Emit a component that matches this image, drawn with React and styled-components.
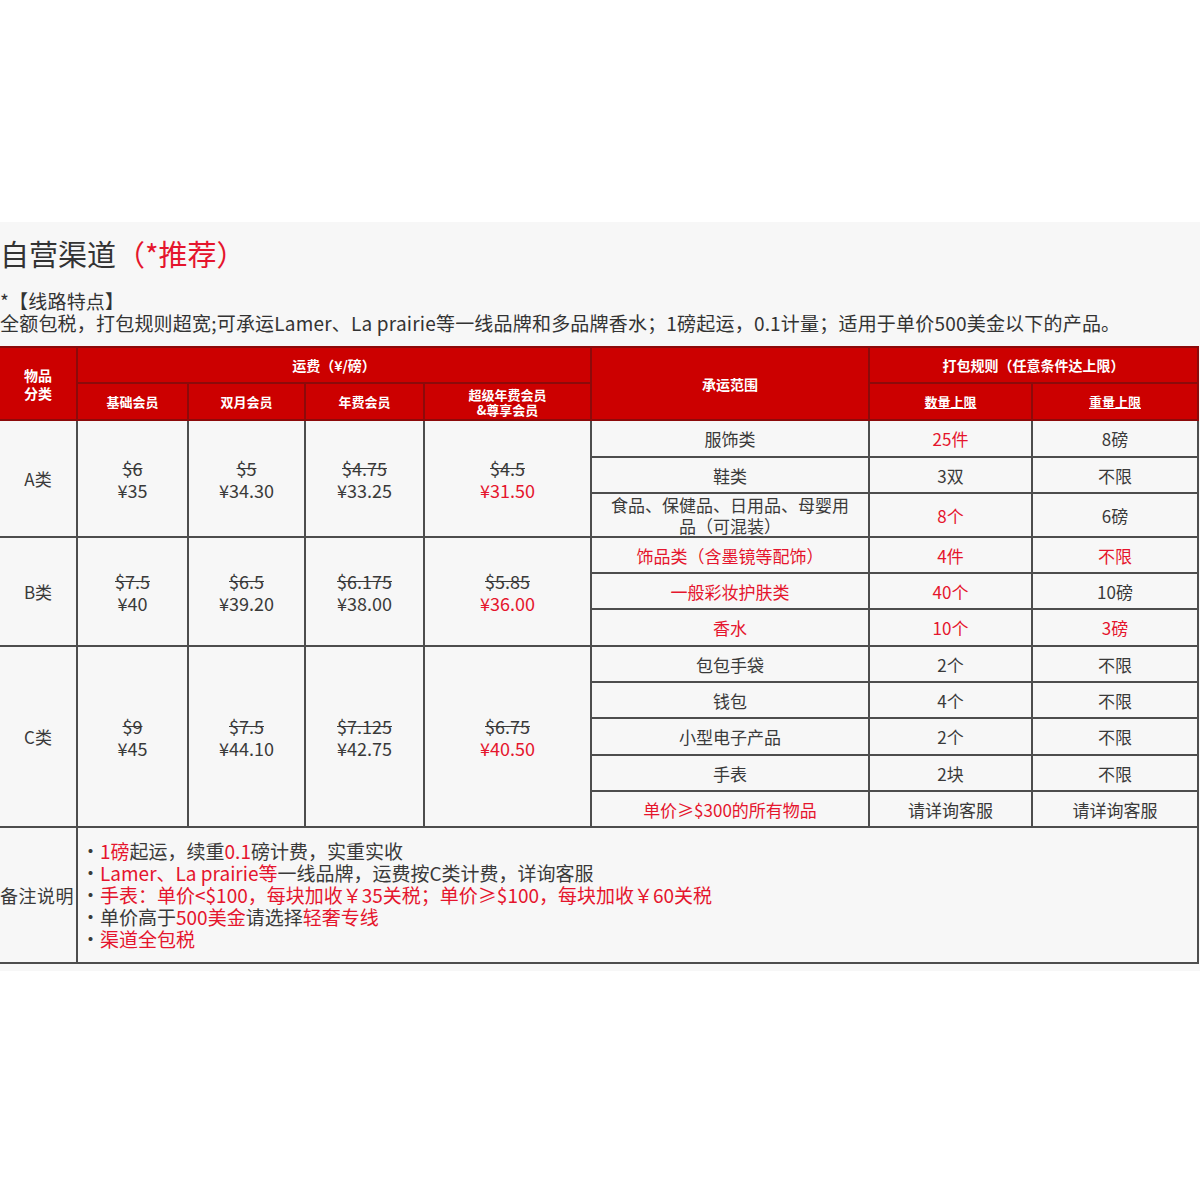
import React from 'react';
import styled, { createGlobalStyle } from 'styled-components';

const GlobalStyle = createGlobalStyle`
    body {
        margin: 0;
        background: #fff;
        font-family: "Noto Sans CJK SC", "Noto Sans", sans-serif;
        color: #3a3a3a;
    }
`;

const Page = styled.div`
    padding-top: 222px;
    min-height: 978px;
    background: #fff;
`;

const Section = styled.section`
    background: #f7f7f7;
    padding: 14px 0 7px;
`;

const Title = styled.h2`
    margin: 0;
    font-size: 29px;
    line-height: 34px;
    font-weight: normal;
    color: #333;
`;

const Red = styled.span`
    color: #e5152d;
`;

const Intro = styled.div`
    margin-top: 20px;
    font-size: 19px;
    letter-spacing: 0.2px;
    line-height: 22px;
    color: #333;
`;

const Table = styled.table`
    margin-top: 12px;
    width: 1198px;
    border-collapse: collapse;
    table-layout: fixed;
    font-size: 17px;
    line-height: 21px;
`;

const Th = styled.th`
    background: #cc0000;
    color: #fff;
    font-weight: bold;
    font-size: ${props => props.small ? '13px' : '14px'};
    line-height: ${props => props.small ? '15px' : '18px'};
    border: 2px solid #8c0a0a;
    border-left: ${props => props.first ? 'none' : '2px solid #8c0a0a'};
    text-align: center;
    vertical-align: middle;
    padding: 0 2px;
    text-decoration: ${props => props.link ? 'underline' : 'none'};
`;

const Td = styled.td`
    border: 2px solid #4d4d4d;
    border-left: ${props => props.first ? 'none' : '2px solid #4d4d4d'};
    text-align: ${props => props.left ? 'left' : 'center'};
    vertical-align: middle;
    padding: ${props => props.left ? '12px 4px 12px 3px' : '0 2px'};
    font-size: ${props => props.big ? '19px' : '17px'};
    color: ${props => props.red ? '#e5152d' : '#3a3a3a'};
`;

const Label = styled(Td)`
    padding: 0;
    font-size: 18px;
    letter-spacing: 0.5px;
    white-space: nowrap;
    text-align: left;
`;

const Old = styled.div`
    font-size: 18px;
    line-height: 22px;
    text-decoration: line-through;
    color: #3a3a3a;
`;

const Now = styled.div`
    font-size: 18px;
    line-height: 22px;
    color: ${props => props.red ? '#e5152d' : '#3a3a3a'};
`;

const Note = styled.div`
    line-height: 22px;
`;

const widths = [77, 111, 117, 119, 167, 278, 163, 166];

const groups = [
    {
        name: 'A类',
        prices: [['$6', '¥35'], ['$5', '¥34.30'], ['$4.75', '¥33.25'], ['$4.5', '¥31.50']],
        rows: [
            { h: 37, scope: ['服饰类'], qty: ['25件', true], wt: ['8磅'] },
            { h: 36, scope: ['鞋类'], qty: ['3双'], wt: ['不限'] },
            { h: 44, scope: [<>食品、保健品、日用品、母婴用<br />品（可混装）</>], qty: ['8个', true], wt: ['6磅'] },
        ],
    },
    {
        name: 'B类',
        prices: [['$7.5', '¥40'], ['$6.5', '¥39.20'], ['$6.175', '¥38.00'], ['$5.85', '¥36.00']],
        rows: [
            { h: 36, scope: ['饰品类（含墨镜等配饰）', true], qty: ['4件', true], wt: ['不限', true] },
            { h: 36, scope: ['一般彩妆护肤类', true], qty: ['40个', true], wt: ['10磅'] },
            { h: 37, scope: ['香水', true], qty: ['10个', true], wt: ['3磅', true] },
        ],
    },
    {
        name: 'C类',
        prices: [['$9', '¥45'], ['$7.5', '¥44.10'], ['$7.125', '¥42.75'], ['$6.75', '¥40.50']],
        rows: [
            { h: 36, scope: ['包包手袋'], qty: ['2个'], wt: ['不限'] },
            { h: 36, scope: ['钱包'], qty: ['4个'], wt: ['不限'] },
            { h: 37, scope: ['小型电子产品'], qty: ['2个'], wt: ['不限'] },
            { h: 36, scope: ['手表'], qty: ['2块'], wt: ['不限'] },
            { h: 36, scope: ['单价≥$300的所有物品', true], qty: ['请详询客服'], wt: ['请详询客服'] },
        ],
    },
];

function GroupRows({ group }) {
    const span = group.rows.length;
    return group.rows.map((row, i) => (
        <tr key={i} style={{ height: row.h }}>
            {i === 0 && (
                <>
                    <Td first rowSpan={span}>{group.name}</Td>
                    {group.prices.map((p, j) => (
                        <Td key={j} rowSpan={span}>
                            <Old>{p[0]}</Old>
                            <Now red={j === 3}>{p[1]}</Now>
                        </Td>
                    ))}
                </>
            )}
            <Td red={row.scope[1]}>{row.scope[0]}</Td>
            <Td red={row.qty[1]}>{row.qty[0]}</Td>
            <Td red={row.wt[1]}>{row.wt[0]}</Td>
        </tr>
    ));
}

export default function App() {
    return (
        <Page>
            <GlobalStyle />
            <Section>
                <Title>自营渠道<Red>（*推荐）</Red></Title>
                <Intro>
                    <div>*【线路特点】</div>
                    <div>全额包税，打包规则超宽;可承运Lamer、La prairie等一线品牌和多品牌香水；1磅起运，0.1计量；适用于单价500美金以下的产品。</div>
                </Intro>
                <Table>
                    <colgroup>
                        {widths.map((w, i) => <col key={i} style={{ width: w }} />)}
                    </colgroup>
                    <thead>
                        <tr style={{ height: 36 }}>
                            <Th first rowSpan={2}>物品<br />分类</Th>
                            <Th colSpan={4}>运费（¥/磅）</Th>
                            <Th rowSpan={2}>承运范围</Th>
                            <Th colSpan={2}>打包规则（任意条件达上限）</Th>
                        </tr>
                        <tr style={{ height: 37 }}>
                            <Th small>基础会员</Th>
                            <Th small>双月会员</Th>
                            <Th small>年费会员</Th>
                            <Th small>超级年费会员<br />&amp;尊享会员</Th>
                            <Th small link>数量上限</Th>
                            <Th small link>重量上限</Th>
                        </tr>
                    </thead>
                    <tbody>
                        {groups.map(g => <GroupRows key={g.name} group={g} />)}
                        <tr>
                            <Label first>备注说明</Label>
                            <Td left big colSpan={7}>
                                <Note>·<Red>1磅</Red>起运，续重<Red>0.1</Red>磅计费，实重实收</Note>
                                <Note>·<Red>Lamer、La prairie等</Red>一线品牌，运费按C类计费，详询客服</Note>
                                <Note>·<Red>手表：单价&lt;$100，每块加收￥35关税；单价≥$100，每块加收￥60关税</Red></Note>
                                <Note>·单价高于<Red>500美金</Red>请选择<Red>轻奢专线</Red></Note>
                                <Note>·<Red>渠道全包税</Red></Note>
                            </Td>
                        </tr>
                    </tbody>
                </Table>
            </Section>
        </Page>
    );
}
